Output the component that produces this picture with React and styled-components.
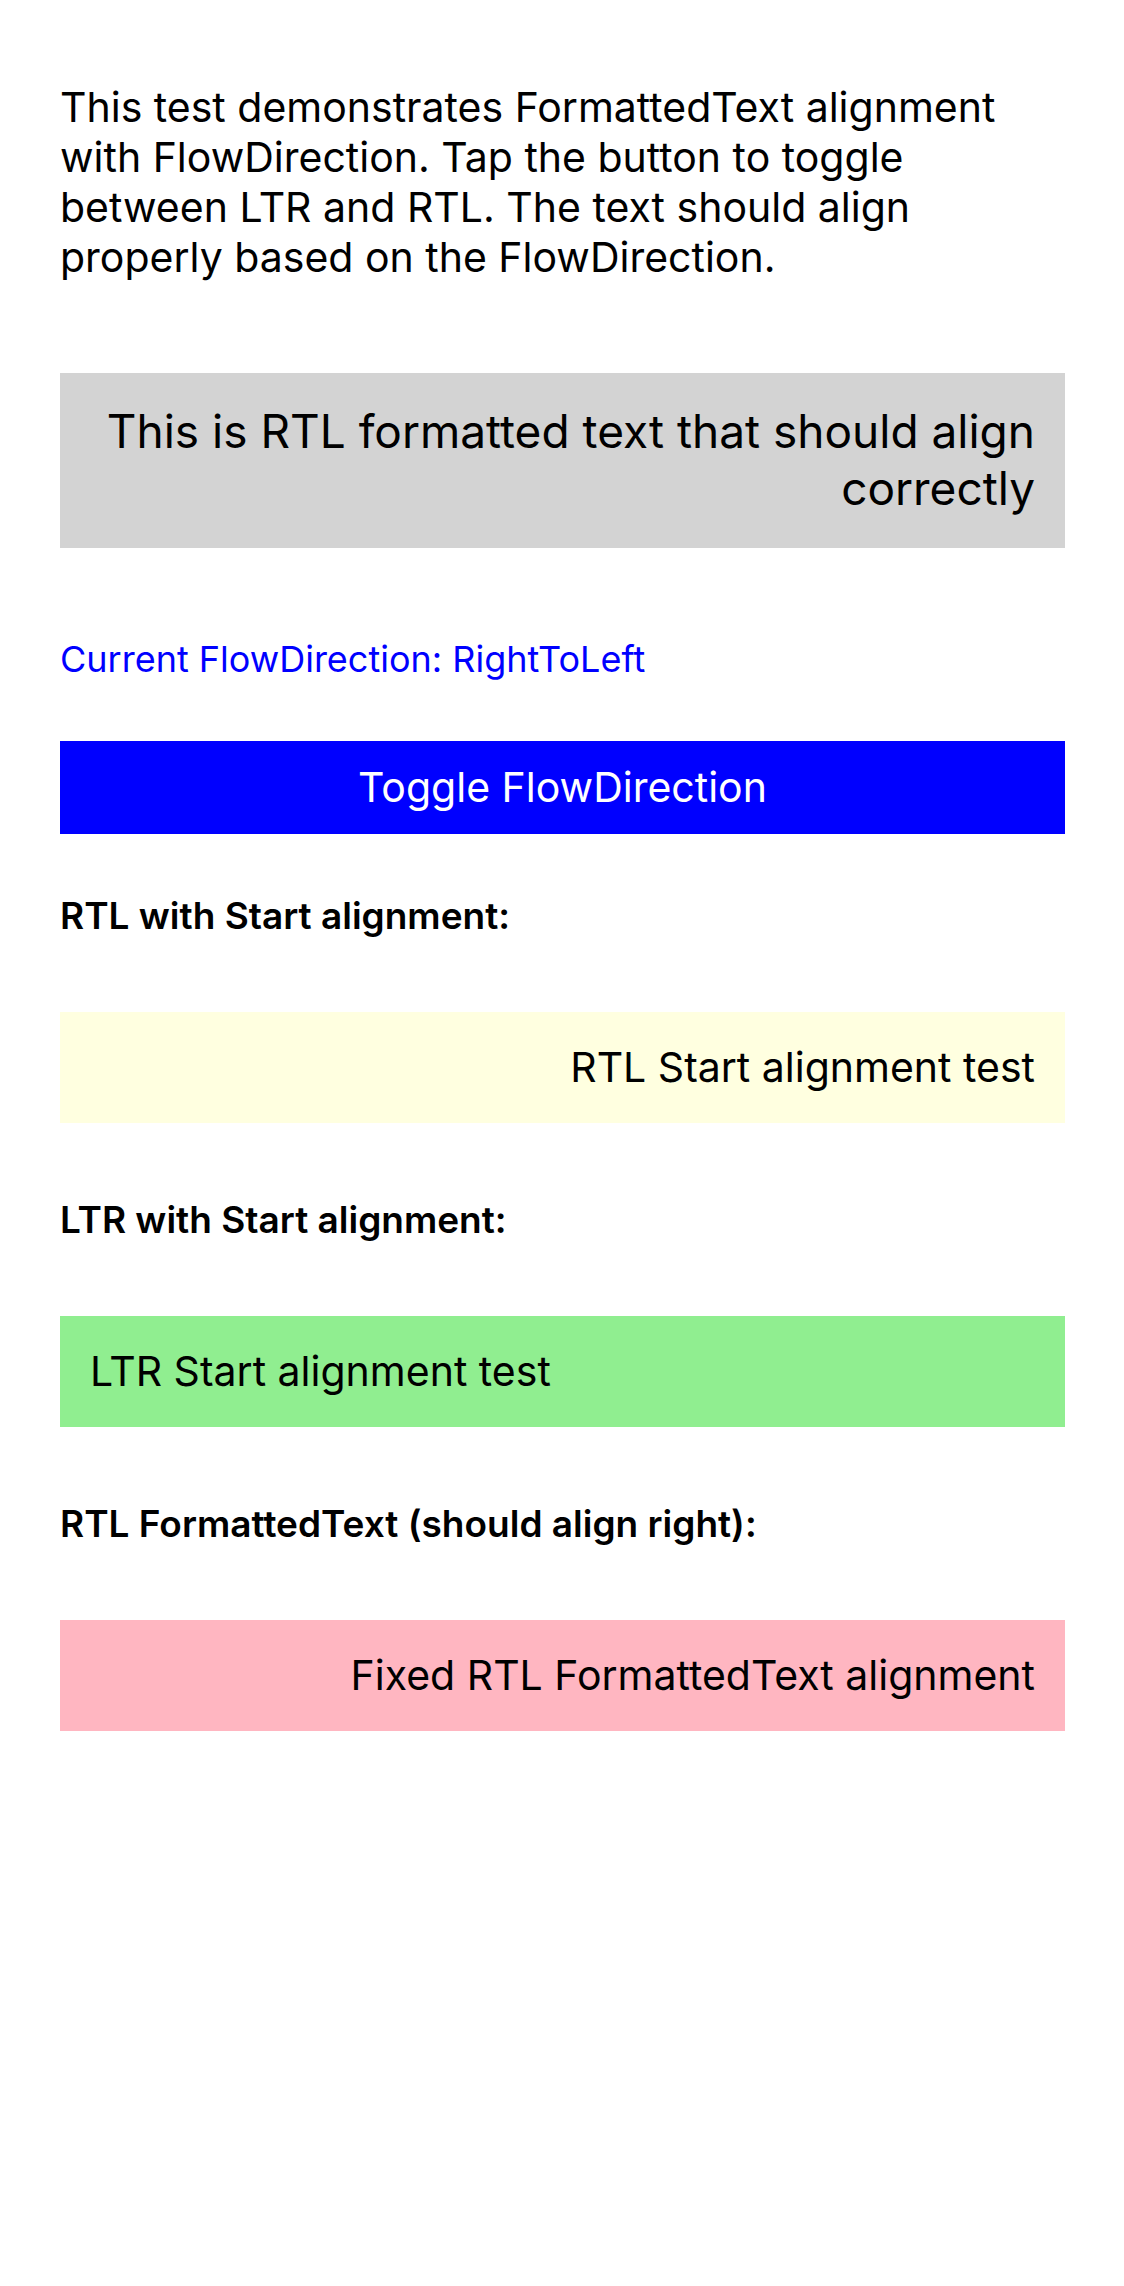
import React, { useState } from 'react';
import styled, { createGlobalStyle } from 'styled-components';

const GlobalStyle = createGlobalStyle`
  * { box-sizing: border-box; }
  body {
    margin: 0;
    background: #ffffff;
    color: #000000;
    font-family: Inter, sans-serif;
  }
`;

const Page = styled.main`
  display: flex;
  flex-direction: column;
  padding: 82px 59px 60px 60px;
`;

const Intro = styled.p`
  margin: 0 0 91px;
  font-size: 41px;
  line-height: 50px;
`;

const Sample = styled.p`
  margin: 0;
  padding: 30px 30px 31px;
  background: ${({ $fill }) => $fill};
  font-size: ${({ $large }) => ($large ? 46 : 41)}px;
  line-height: ${({ $large }) => ($large ? 57 : 50)}px;
  text-align: start;
`;

const Status = styled.p`
  margin: 90px 0 60px;
  color: #0000ff;
  font-size: 36px;
  line-height: 43px;
`;

const ToggleButton = styled.button`
  padding: 21px 30px 22px;
  border: 0;
  border-radius: 0;
  background: #0000ff;
  color: #ffffff;
  font-family: inherit;
  font-size: 41px;
  line-height: 50px;
  cursor: pointer;
`;

const Section = styled.section`
  margin-top: ${({ $first }) => ($first ? 60 : 75)}px;
`;

const Heading = styled.h2`
  margin: 0 0 75px;
  font-size: 37px;
  font-weight: 600;
  line-height: 43px;
`;

const sections = [
  { title: 'RTL with Start alignment:', text: 'RTL Start alignment test', dir: 'rtl', fill: '#ffffe0' },
  { title: 'LTR with Start alignment:', text: 'LTR Start alignment test', dir: 'ltr', fill: '#90ee90' },
  { title: 'RTL FormattedText (should align right):', text: 'Fixed RTL FormattedText alignment', dir: 'rtl', fill: '#ffb6c1' },
];

export default function App() {
  const [rtl, setRtl] = useState(true);
  return (
    <>
      <GlobalStyle />
      <Page>
        <Intro>
          This test demonstrates FormattedText alignment with FlowDirection. Tap the button to
          toggle between LTR and RTL. The text should align properly based on the FlowDirection.
        </Intro>
        <Sample $large $fill="#d3d3d3" dir={rtl ? 'rtl' : 'ltr'}>
          This is {rtl ? 'RTL' : 'LTR'} formatted text that should align correctly
        </Sample>
        <Status>Current FlowDirection: {rtl ? 'RightToLeft' : 'LeftToRight'}</Status>
        <ToggleButton type="button" onClick={() => setRtl(!rtl)}>
          Toggle FlowDirection
        </ToggleButton>
        {sections.map((s, i) => (
          <Section key={s.title} $first={i === 0}>
            <Heading>{s.title}</Heading>
            <Sample $fill={s.fill} dir={s.dir}>{s.text}</Sample>
          </Section>
        ))}
      </Page>
    </>
  );
}
